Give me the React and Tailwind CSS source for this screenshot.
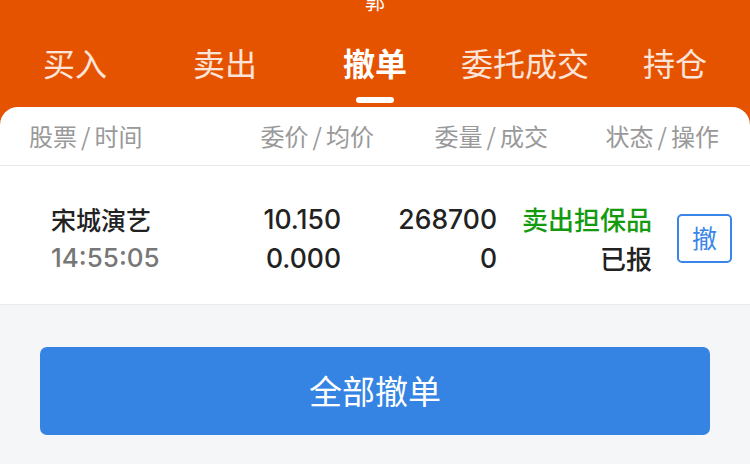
import React from "react";

const tabs = ["买入", "卖出", "撤单", "委托成交", "持仓"];
const active = "撤单";

const cjk = { fontFamily: '"Noto Sans CJK SC", sans-serif' };
const num = { fontFamily: 'Inter, "Noto Sans CJK SC", sans-serif' };

const Head = ({ a, b, className }) => (
  <span className={className}>
    {a}
    <span className="mx-[4px]">/</span>
    {b}
  </span>
);

export default function App() {
  return (
    <div className="w-[750px] h-[464px] overflow-hidden bg-[#f5f6f8]" style={cjk}>
      <div className="bg-[#e65300]">
        {/* page title, cut off at top */}
        <div className="h-[14px] overflow-hidden flex justify-center">
          <div className="text-white text-[20px] leading-[20px] -mt-[8px]">郭</div>
        </div>
        <div className="grid grid-cols-5 h-[93px]">
          {tabs.map((t) => (
            <div key={t} className="flex flex-col items-center">
              <div
                className={`mt-[24px] text-[32px] leading-[48px] ${
                  t === active ? "text-white font-bold" : "text-white/85"
                }`}
              >
                {t}
              </div>
              {t === active && <div className="mt-[11px] w-[38px] h-[6px] rounded-full bg-white" />}
            </div>
          ))}
        </div>

        <div className="bg-white rounded-t-[18px]">
          <div className="flex items-center h-[59px] pl-[29px] pr-[31px] border-b border-[#ebebeb] text-[24px] text-[#999]">
            <Head a="股票" b="时间" className="flex-1" />
            <Head a="委价" b="均价" className="w-[174px] text-right" />
            <Head a="委量" b="成交" className="w-[174px] text-right" />
            <Head a="状态" b="操作" className="w-[171px] text-right" />
          </div>

          <div className="flex items-center h-[139px] pl-[51px] pr-[18px] pt-[6px] border-b border-[#ebebeb]">
            <div className="flex-1 flex flex-col gap-[11px]">
              <div className="text-[25px] leading-[28px] text-[#222] font-medium">宋城演艺</div>
              <div className="text-[26px] leading-[28px] text-[#777] font-medium" style={num}>14:55:05</div>
            </div>
            <div className="w-[156px] flex flex-col gap-[11px] items-end text-[26.5px] leading-[28px] text-[#222] font-medium" style={num}>
              <div>10.150</div>
              <div>0.000</div>
            </div>
            <div className="w-[156px] flex flex-col gap-[11px] items-end text-[26.5px] leading-[28px] text-[#222] font-medium" style={num}>
              <div>268700</div>
              <div>0</div>
            </div>
            <div className="w-[155px] flex flex-col gap-[11px] items-end text-[26px] leading-[28px] font-medium">
              <div className="text-[#149a0e]">卖出担保品</div>
              <div className="text-[#222]">已报</div>
            </div>
            <div className="ml-[25px] w-[55px] h-[49px] flex items-center justify-center border-2 border-[#3a86e8] rounded-[5px] text-[#3a86e8] text-[25px]">
              撤
            </div>
          </div>
        </div>
      </div>

      <div className="px-[40px] pt-[42px]">
        <div className="h-[88px] rounded-[7px] bg-[#3583e3] flex items-center justify-center text-white text-[33px]">
          全部撤单
        </div>
      </div>
    </div>
  );
}
